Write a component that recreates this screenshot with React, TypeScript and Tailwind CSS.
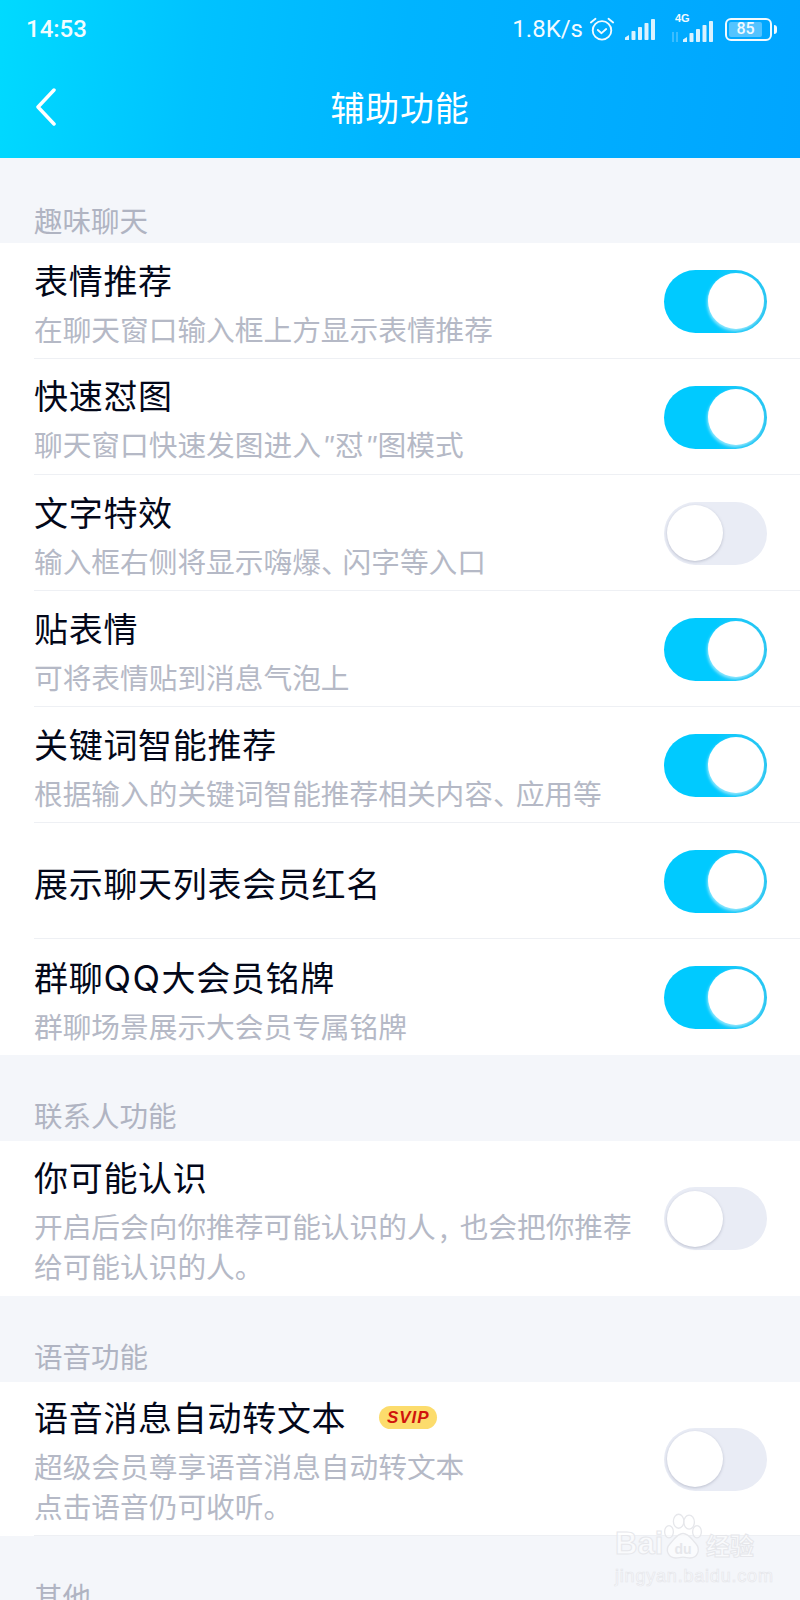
import React from "react";

const cjk = { fontFamily: '"Noto Sans CJK SC", "Noto Sans", sans-serif' };

function Toggle({ on, nudge }: { on: boolean; nudge?: boolean }) {
    if (on) {
        return (
            <div className={`flex h-[63px] w-[103px] shrink-0 items-center justify-end rounded-full bg-gradient-to-r from-[#00caff] via-[#00caff] to-[#28c6f2] pr-[3px] ${nudge ? "mt-[1px]" : ""}`}>
                <div className="h-[56px] w-[56px] rounded-full bg-white shadow-[-1px_2px_3px_rgba(255,255,255,0.55)]" />
            </div>
        );
    }
    return (
        <div className={`flex h-[63px] w-[103px] shrink-0 items-center rounded-full bg-[#e9ecf5] pl-[3px] ${nudge ? "mt-[1px]" : ""}`}>
            <div className="h-[56px] w-[56px] rounded-full bg-white shadow-[0_1px_3px_rgba(120,125,150,0.4)]" />
        </div>
    );
}

interface RowProps {
    title: React.ReactNode;
    sub?: React.ReactNode[];
    on: boolean;
    h?: string;
    divider?: boolean;
    badge?: boolean;
}

function Row({ title, sub, on, h = "h-[116px]", divider = true, badge }: RowProps) {
    return (
        <div className={`${h} pl-[34px]`}>
            <div className={`flex h-full items-center justify-between pr-[33px] ${divider ? "border-b border-[#eef0f4]" : ""}`}>
                <div className={sub && sub.length > 1 ? "pt-[3px]" : "pt-[5px]"}>
                    <div className="flex items-center">
                        <span className="text-[34px] leading-[46px] tracking-[0.7px] text-[#03081a]">{title}</span>
                        {badge && (
                            <span className="ml-[33px] flex h-[23px] w-[58px] items-center justify-center rounded-full bg-[#fcdc6c] text-[17px] font-bold italic leading-none tracking-[1px] text-[#d0140c]" style={{ fontFamily: '"Liberation Sans", sans-serif' }}>
                                SVIP
                            </span>
                        )}
                    </div>
                    {sub && (
                        <div className="mt-[6px]">
                            {sub.map((s, i) => (
                                <div key={i} className="text-[28.7px] leading-[40px] text-[#b5b9c6]">{s}</div>
                            ))}
                        </div>
                    )}
                </div>
                <Toggle on={on} nudge={divider} />
            </div>
        </div>
    );
}

function Section({ title, h = "h-[86px]", pb = "pb-[6px]" }: { title: string; h?: string; pb?: string }) {
    return (
        <div className={`${h} ${pb} flex items-end pl-[34px] text-[28.5px] leading-[40px] text-[#b0b4c2]`}>{title}</div>
    );
}

function Quote() {
    return (
        <span className="inline-block w-[14px] text-center italic" style={{ fontFamily: '"Liberation Sans", sans-serif' }}>"</span>
    );
}

function SignalBars() {
    return (
        <svg width="30" height="21" viewBox="0 0 30 21" fill="#fff" className="opacity-90">
            <path d="M0 21v-2.500l4-2.500v5z" />
            <rect x="6.500" y="12" width="4" height="9" rx="0.800" />
            <rect x="13" y="8" width="4" height="13" rx="0.800" />
            <rect x="19.500" y="4" width="4" height="17" rx="0.800" />
            <rect x="26" y="0" width="4" height="21" rx="0.800" />
        </svg>
    );
}

function StatusBar() {
    return (
        <div className="flex h-[58px] items-center justify-between pl-[26px] pr-[23px] text-white opacity-95">
            <span className="text-[24px] font-medium leading-none" style={{ fontFamily: 'Roboto, sans-serif' }}>14:53</span>
            <div className="flex items-center">
                <span className="text-[24px] leading-none" style={{ fontFamily: 'Roboto, sans-serif' }}>1.8K/s</span>
                <svg width="26" height="26" viewBox="0 0 28 28" fill="none" stroke="#fff" strokeWidth="2" strokeLinecap="round" strokeLinejoin="round" className="ml-[6px]">
                    <circle cx="14" cy="15.500" r="10" />
                    <path d="M9.500 15l4 3.500 5-4.500" />
                    <path d="M2 7l5-4M26 7l-5-4" />
                </svg>
                <div className="ml-[10px]"><SignalBars /></div>
                <div className="relative ml-[16px] flex h-[26px] w-[42px] items-end justify-end">
                    <span className="absolute left-[4px] top-[-3px] text-[11px] font-bold leading-none" style={{ fontFamily: '"Liberation Sans", sans-serif' }}>4G</span>
                    <svg width="8" height="10" viewBox="0 0 8 10" stroke="#fff" strokeWidth="1" className="absolute bottom-0 left-0 opacity-50">
                        <path d="M2 0v10M6 0v10" />
                    </svg>
                    <SignalBars />
                </div>
                <div className="ml-[12px] flex items-center">
                    <div className="flex h-[23px] w-[47px] items-center rounded-[6px] border-2 border-white p-[2px]">
                        <div className="flex h-full w-[33px] items-center justify-center rounded-[2px] bg-white/35 text-[16px] font-medium leading-none" style={{ fontFamily: 'Roboto, sans-serif' }}>85</div>
                    </div>
                    <div className="ml-[2px] h-[9px] w-[3px] rounded-r-full bg-white" />
                </div>
            </div>
        </div>
    );
}

function Watermark() {
    return (
        <div className="absolute left-[615px] top-[1512px] w-[170px]" style={{ fontFamily: '"Liberation Sans", sans-serif' }}>
            <div className="flex h-[50px] items-end">
                <span className="w-[47px] text-[31px] font-bold leading-[36px] text-white/50 [-webkit-text-stroke:1px_#e6e7eb]">Bai</span>
                <svg width="42" height="50" viewBox="0 0 48 56" fill="rgba(255,255,255,0.5)" stroke="#e6e7eb" strokeWidth="1.500">
                    <ellipse cx="8" cy="22" rx="5" ry="7" />
                    <ellipse cx="19" cy="10" rx="6" ry="8" />
                    <ellipse cx="31" cy="11" rx="6" ry="8" />
                    <ellipse cx="40" cy="22" rx="5" ry="7" />
                    <path d="M24 24c7 0 10 7 15 12 5 6 2 16-7 16-3 0-5-1-8-1s-5 1-8 1C7 52 3 42 9 36c5-5 8-12 15-12z" />
                    <text x="24" y="47" textAnchor="middle" fontSize="16" fontWeight="700" fill="#e6e7eb" stroke="none">du</text>
                </svg>
                <span className="ml-[2px] text-[24px] font-bold leading-[34px] text-white/50 [-webkit-text-stroke:1px_#e6e7eb]" style={cjk}>经验</span>
            </div>
            <div className="mt-[4px] text-[18px] leading-[20px] tracking-[0.8px] text-white/50 [-webkit-text-stroke:0.7px_#e6e7eb]">jingyan.baidu.com</div>
        </div>
    );
}

export default function App() {
    return (
        <div className="relative h-[1600px] w-[800px] overflow-hidden bg-[#f4f6fa]" style={cjk}>
            <div className="h-[158px] bg-[linear-gradient(97deg,#00daff_0%,#00c2ff_25%,#00b4ff_50%,#00a5ff_100%)]">
                <StatusBar />
                <div className="relative flex h-[100px] items-center justify-center pb-[2px]">
                    <svg width="22" height="38" viewBox="0 0 22 38" fill="none" stroke="#fff" strokeWidth="3.500" strokeLinecap="round" strokeLinejoin="round" className="absolute left-[35px] top-[30px]">
                        <path d="M19 2L3 19l16 17" />
                    </svg>
                    <span className="text-[34px] leading-none tracking-[0.7px] text-white">辅助功能</span>
                </div>
            </div>

            <Section title="趣味聊天" h="h-[85px]" pb="pb-[3px]" />
            <div className="bg-white">
                <Row title="表情推荐" sub={["在聊天窗口输入框上方显示表情推荐"]} on />
                <Row title="快速怼图" sub={[<>聊天窗口快速发图进入<Quote />怼<Quote />图模式</>]} on />
                <Row title="文字特效" sub={[<>输入框右侧将显示嗨爆<span className="tracking-[-7px]">、</span>闪字等入口</>]} on={false} />
                <Row title="贴表情" sub={["可将表情贴到消息气泡上"]} on />
                <Row title="关键词智能推荐" sub={[<>根据输入的关键词智能推荐相关内容<span className="tracking-[-6px]">、</span>应用等</>]} on />
                <Row title="展示聊天列表会员红名" on />
                <Row title={<>群聊<span className="text-[36px] leading-none tracking-[1.5px]" style={{ fontFamily: "Inter, sans-serif" }}>QQ</span>大会员铭牌</>} sub={["群聊场景展示大会员专属铭牌"]} on divider={false} />
            </div>

            <Section title="联系人功能" />
            <div className="bg-white">
                <Row title="你可能认识" sub={[<>开启后会向你推荐可能认识的人<span className="inline-block w-[24px] pl-[4px]">,</span>也会把你推荐</>, "给可能认识的人。"]} on={false} h="h-[155px]" divider={false} />
            </div>

            <Section title="语音功能" />
            <div className="bg-white">
                <Row title="语音消息自动转文本" badge sub={["超级会员尊享语音消息自动转文本", "点击语音仍可收听。"]} on={false} h="h-[154px]" />
            </div>

            <Section title="其他" />
            <Watermark />
        </div>
    );
}
